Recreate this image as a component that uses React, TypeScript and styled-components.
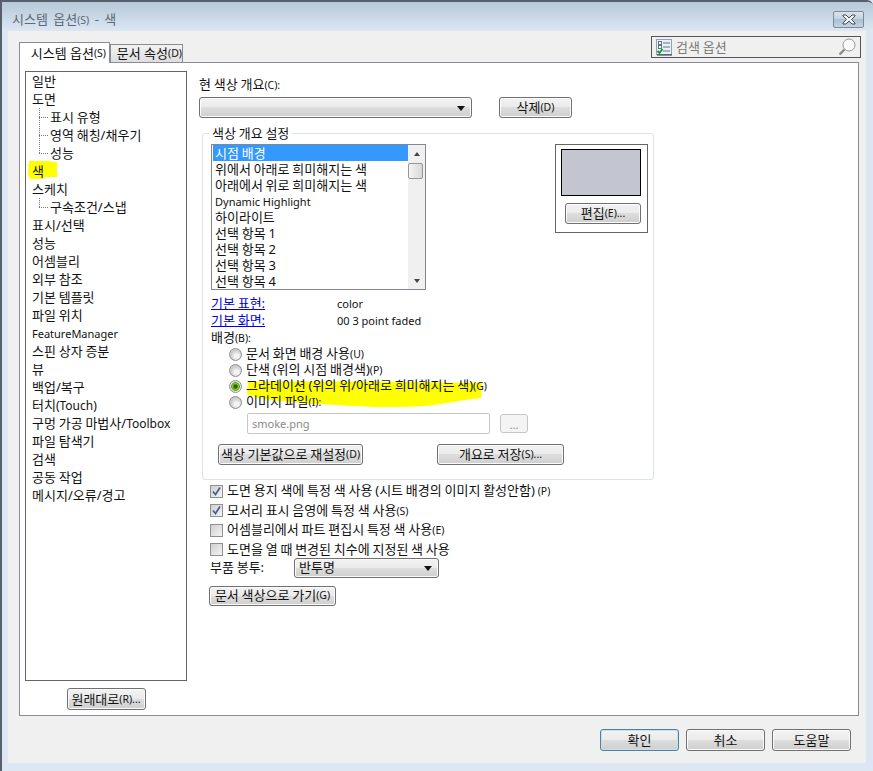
import React from 'react';
import styled, { createGlobalStyle, css } from 'styled-components';

const GlobalStyle = createGlobalStyle`
    html, body {
        margin: 0;
        padding: 0;
        background: #dce7f3;
    }

    body {
        font-family: "Noto Sans", "Noto Sans CJK KR", sans-serif;
        font-size: 13px;
        line-height: 15px;
        word-spacing: -0.6px;
        color: #111;
    }

    * {
        box-sizing: border-box;
    }
`;

const TREE: { label?: string; latin?: string; suffix?: string; child?: boolean; last?: boolean; mark?: boolean }[] = [
    { label: '일반' },
    { label: '도면' },
    { label: '표시 유형', child: true },
    { label: '영역 해칭/채우기', child: true },
    { label: '성능', child: true, last: true },
    { label: '색', mark: true },
    { label: '스케치' },
    { label: '구속조건/스냅', child: true, last: true },
    { label: '표시/선택' },
    { label: '성능' },
    { label: '어셈블리' },
    { label: '외부 참조' },
    { label: '기본 템플릿' },
    { label: '파일 위치' },
    { latin: 'FeatureManager' },
    { label: '스핀 상자 증분' },
    { label: '뷰' },
    { label: '백업/복구' },
    { label: '터치', suffix: '(Touch)' },
    { label: '구멍 가공 마법사/', suffix: 'Toolbox' },
    { label: '파일 탐색기' },
    { label: '검색' },
    { label: '공동 작업' },
    { label: '메시지/오류/경고' },
];

const COLOR_ITEMS = [
    '시점 배경',
    '위에서 아래로 희미해지는 색',
    '아래에서 위로 희미해지는 색',
    'Dynamic Highlight',
    '하이라이트',
    '선택 항목 1',
    '선택 항목 2',
    '선택 항목 3',
    '선택 항목 4',
];

const App: React.FC = () => {
    return (
        <Window>
            <GlobalStyle />
            <TitleBar>
                <Title>
                    시스템 옵션<Key>(S)</Key> - 색
                </Title>
                <CloseButton>
                    <svg width="16" height="11" viewBox="0 0 16 11">
                        <path
                            d="M2 1h3l3 3 3-3h3v1l-3.5 3.5L14 9v1h-3L8 7l-3 3H2V9l3.5-3.5L2 2z"
                            fill="#f4f6f8"
                            stroke="#3f4d5c"
                            strokeWidth="1"
                        />
                    </svg>
                </CloseButton>
            </TitleBar>

            <Body>
                <TabStrip>
                    <Tabs>
                        <Tab $active>
                            시스템 옵션<Key>(S)</Key>
                        </Tab>
                        <Tab>
                            문서 속성<Key>(D)</Key>
                        </Tab>
                    </Tabs>
                    <SearchBox>
                        <svg width="17" height="17" viewBox="0 0 17 17">
                            <rect x="0.5" y="0.5" width="15" height="15" fill="#eaf1f6" stroke="#8fa3b3" />
                            <rect x="2.5" y="2.5" width="3" height="3" fill="#fff" stroke="#5f7486" />
                            <rect x="2.5" y="6.5" width="3" height="3" fill="#fff" stroke="#5f7486" />
                            <path d="M7 4h7M7 8h7M7 12h7" stroke="#5f7486" />
                            <path d="M1 16h15" stroke="#1e2a38" />
                            <path d="M1.5 12l2 2 3-4" stroke="#0c9a1e" strokeWidth="1.8" fill="none" />
                        </svg>
                        <SearchText>검색 옵션</SearchText>
                        <svg width="18" height="18" viewBox="0 0 18 18">
                            <circle cx="11" cy="7" r="6" fill="#fbfbfb" stroke="#9a9a9a" />
                            <path d="M6.5 11.5L1.5 16.5" stroke="#8a8a8a" strokeWidth="2.4" />
                        </svg>
                    </SearchBox>
                </TabStrip>

                <Pane>
                    <LeftColumn>
                        <Tree>
                            {TREE.map((item, i) => (
                                <TreeRow key={i} $child={item.child}>
                                    {item.child && <Elbow $last={item.last} />}
                                    {item.mark && (
                                        <Marker width="30" height="18" viewBox="0 0 30 18">
                                            <path d="M1 0h21l1 1h6v15H17l-1 2H2l-2-5z" fill="#ffff00" />
                                        </Marker>
                                    )}
                                    <RowText>
                                        {item.label}
                                        {item.suffix && <TreeSuffix>{item.suffix}</TreeSuffix>}
                                        {item.latin && <Latin>{item.latin}</Latin>}
                                    </RowText>
                                </TreeRow>
                            ))}
                        </Tree>
                        <ResetWrap>
                            <Button $width={79} $height={22}>
                                원래대로<Key>(R)...</Key>
                            </Button>
                        </ResetWrap>
                    </LeftColumn>

                    <RightColumn>
                        <FieldLabel>
                            현 색상 개요<Key>(C):</Key>
                        </FieldLabel>
                        <SchemeRow>
                            <Dropdown $width={273} $height={21} />
                            <Button $width={73} $height={21}>
                                삭제<Key>(D)</Key>
                            </Button>
                        </SchemeRow>

                        <Group>
                            <Legend>색상 개요 설정</Legend>
                            <ListRow>
                                <ListBox>
                                    <ListItems>
                                        {COLOR_ITEMS.map((item, i) => (
                                            <ListItem key={i} $selected={i === 0}>
                                                {item === 'Dynamic Highlight' ? <Latin>{item}</Latin> : item}
                                            </ListItem>
                                        ))}
                                    </ListItems>
                                    <ScrollBar>
                                        <ScrollArrow $up />
                                        <ScrollThumb />
                                        <ScrollArrow />
                                    </ScrollBar>
                                </ListBox>
                                <PreviewBox>
                                    <Swatch />
                                    <Button $width={76} $height={21}>
                                        편집<Key>(E)...</Key>
                                    </Button>
                                </PreviewBox>
                            </ListRow>

                            <InfoGrid>
                                <InfoLink>기본 표현:</InfoLink>
                                <Latin>color</Latin>
                                <InfoLink>기본 화면:</InfoLink>
                                <Latin>00 3 point faded</Latin>
                            </InfoGrid>
                            <FieldLabel $tight>
                                배경<Key>(B):</Key>
                            </FieldLabel>

                            <RadioList>
                                <RadioRow>
                                    <Radio />
                                    <span>
                                        문서 화면 배경 사용<Key>(U)</Key>
                                    </span>
                                </RadioRow>
                                <RadioRow>
                                    <Radio />
                                    <span>
                                        단색 (위의 시점 배경색)<Key>(P)</Key>
                                    </span>
                                </RadioRow>
                                <RadioRow>
                                    <Radio $checked />
                                    <Scribble width="238" height="26" viewBox="0 0 238 26">
                                        <path
                                            d="M2 0C60 -1 170 0 236 1L235 16C215 18 205 21 180 24C150 26 120 25 90 23C60 21 35 20 12 16L1 12Z"
                                            fill="#ffff00"
                                        />
                                    </Scribble>
                                    <RadioText>
                                        그라데이션 (위의 위/아래로 희미해지는 색)<Key>(G)</Key>
                                    </RadioText>
                                </RadioRow>
                                <RadioRow>
                                    <Radio />
                                    <RadioText>
                                        이미지 파일<Key>(I):</Key>
                                    </RadioText>
                                </RadioRow>
                            </RadioList>

                            <FileRow>
                                <FileInput>smoke.png</FileInput>
                                <BrowseButton>...</BrowseButton>
                            </FileRow>

                            <ActionRow>
                                <Button $width={145} $height={21}>
                                    색상 기본값으로 재설정<Key>(D)</Key>
                                </Button>
                                <Button $width={127} $height={21}>
                                    개요로 저장<Key>(S)...</Key>
                                </Button>
                            </ActionRow>
                        </Group>

                        <CheckList>
                            <CheckRow>
                                <CheckBox>
                                    <CheckMark />
                                </CheckBox>
                                <span>
                                    도면 용지 색에 특정 색 사용 (시트 배경의 이미지 활성안함) <Key>(P)</Key>
                                </span>
                            </CheckRow>
                            <CheckRow>
                                <CheckBox>
                                    <CheckMark />
                                </CheckBox>
                                <span>
                                    모서리 표시 음영에 특정 색 사용<Key>(S)</Key>
                                </span>
                            </CheckRow>
                            <CheckRow>
                                <CheckBox />
                                <span>
                                    어셈블리에서 파트 편집시 특정 색 사용<Key>(E)</Key>
                                </span>
                            </CheckRow>
                            <CheckRow>
                                <CheckBox />
                                <span>도면을 열 때 변경된 치수에 지정된 색 사용</span>
                            </CheckRow>
                        </CheckList>

                        <PartRow>
                            <PartLabel>부품 봉투:</PartLabel>
                            <Dropdown $width={145} $height={20}>
                                반투명
                            </Dropdown>
                        </PartRow>

                        <GoRow>
                            <Button $width={127} $height={20}>
                                문서 색상으로 가기<Key>(G)</Key>
                            </Button>
                        </GoRow>
                    </RightColumn>
                </Pane>

                <Footer>
                    <Button $width={79} $height={22} $primary>
                        확인
                    </Button>
                    <Button $width={79} $height={22}>
                        취소
                    </Button>
                    <Button $width={79} $height={22}>
                        도움말
                    </Button>
                </Footer>
            </Body>
        </Window>
    );
};

const CheckMark: React.FC = () => (
    <svg width="11" height="11" viewBox="0 0 11 11">
        <path d="M2 5.5l2.5 3L9 1.5" stroke="#4a6096" strokeWidth="1.8" fill="none" />
    </svg>
);

const Window = styled.div`
    width: 873px;
    height: 771px;
    overflow: hidden;
    display: flex;
    flex-direction: column;
    padding: 0 0 8px 2px;
    background: #dce7f3;
    border-top: 2px solid #56606c;
    border-left: 2px solid #56606c;
    border-top-right-radius: 6px;
`;

const TitleBar = styled.div`
    height: 29px;
    flex-shrink: 0;
    display: flex;
    align-items: flex-start;
    justify-content: space-between;
    padding: 9px 9px 0 8px;
    margin-left: -2px;
    background: linear-gradient(to bottom, #b6c8d8, #dce7f3);
`;

const Title = styled.div`
    color: #5d6973;
    line-height: 16px;
    padding-left: 2px;
    word-spacing: 2px;
`;

const CloseButton = styled.div`
    width: 31px;
    height: 17px;
    display: flex;
    align-items: center;
    justify-content: center;
    border: 1px solid #7b8a99;
    border-radius: 2px;
    background: linear-gradient(to bottom, #dbe4ec, #c2d0dd 50%, #aebfcf 50%, #c4d3e0);
`;

const Body = styled.div`
    flex: 1;
    display: flex;
    flex-direction: column;
    margin: 0 7px 0 4px;
    padding: 5px 5px 0 11px;
    background: #f0f0f0;
`;

const TabStrip = styled.div`
    height: 26px;
    flex-shrink: 0;
    display: flex;
    justify-content: space-between;
    align-items: flex-start;
`;

const Tabs = styled.div`
    height: 27px;
    display: flex;
    align-items: flex-end;
    position: relative;
    z-index: 1;
`;

const Tab = styled.div<{ $active?: boolean }>`
    display: flex;
    align-items: center;
    justify-content: flex-end;
    word-spacing: 0;
    border: 1px solid #898c95;
    border-bottom: none;
    ${(p) =>
        p.$active
            ? css`
                  width: 91px;
                  height: 21px;
                  padding-right: 3px;
                  background: #fff;
              `
            : css`
                  width: 73px;
                  height: 18px;
                  margin-bottom: 1px;
                  background: linear-gradient(to bottom, #f2f2f2, #dedede);
              `}
`;

const Key = styled.span`
    font-size: 10.5px;
    word-spacing: 0;
`;

const Latin = styled.span`
    font-size: 11px;
    word-spacing: 0;
`;

const TreeSuffix = styled.span`
    font-size: 12px;
`;

const SearchBox = styled.div`
    width: 210px;
    height: 22px;
    display: flex;
    align-items: center;
    padding: 0 4px 0 4px;
    border: 1px solid #555;
    background: #f0f0f0;
`;

const SearchText = styled.span`
    flex: 1;
    margin-left: 3px;
    color: #7b7b7b;
`;

const Pane = styled.div`
    width: 840px;
    height: 654px;
    flex-shrink: 0;
    display: flex;
    padding: 8px 0 0 5px;
    background: #fff;
    border: 1px solid #898c95;
`;

const LeftColumn = styled.div`
    width: 162px;
    flex-shrink: 0;
    display: flex;
    flex-direction: column;
`;

const Tree = styled.div`
    height: 610px;
    padding: 0 0 0 6px;
    border: 1px solid #666;
    background: #fff;
`;

const TreeRow = styled.div<{ $child?: boolean }>`
    position: relative;
    height: 18px;
    display: flex;
    align-items: center;
    white-space: nowrap;
    padding-left: ${(p) => (p.$child ? '7px' : '0')};
`;

const RowText = styled.span`
    position: relative;
`;

const Elbow = styled.span<{ $last?: boolean }>`
    width: 11px;
    height: 18px;
    flex-shrink: 0;
    background-image: repeating-linear-gradient(to bottom, #777 0 1px, transparent 1px 2px),
        repeating-linear-gradient(to right, #777 0 1px, transparent 1px 2px);
    background-repeat: no-repeat;
    background-position: left top, left center;
    background-size: 1px ${(p) => (p.$last ? '50%' : '100%')}, 9px 1px;
`;

const Marker = styled.svg`
    position: absolute;
    left: -4px;
    top: -1px;
`;

const ResetWrap = styled.div`
    display: flex;
    justify-content: center;
    margin-top: 7px;
`;

const Button = styled.div<{ $width: number; $height: number; $primary?: boolean }>`
    width: ${(p) => p.$width}px;
    height: ${(p) => p.$height}px;
    flex-shrink: 0;
    display: flex;
    align-items: center;
    justify-content: center;
    white-space: nowrap;
    border: 1px solid ${(p) => (p.$primary ? '#4f8299' : '#707070')};
    border-radius: 3px;
    box-shadow: inset 0 0 0 1px ${(p) => (p.$primary ? '#c4e3ef' : '#fbfbfb')};
    background: linear-gradient(to bottom, #f2f2f2, #ebebeb 50%, #dddddd 50%, #cfcfcf);
`;

const RightColumn = styled.div`
    margin-left: 12px;
    flex: 1;
`;

const FieldLabel = styled.div<{ $tight?: boolean }>`
    height: ${(p) => (p.$tight ? '17px' : '16px')};
    line-height: ${(p) => (p.$tight ? '17px' : '16px')};
    margin-top: ${(p) => (p.$tight ? '0' : '5px')};
`;

const SchemeRow = styled.div`
    margin-top: 5px;
    display: flex;
    gap: 27px;
`;

const Dropdown = styled.div<{ $width: number; $height: number }>`
    width: ${(p) => p.$width}px;
    height: ${(p) => p.$height}px;
    position: relative;
    display: flex;
    align-items: center;
    padding-left: 4px;
    border: 1px solid #707070;
    border-radius: 3px;
    box-shadow: inset 0 0 0 1px #fbfbfb;
    background: linear-gradient(to bottom, #f2f2f2, #ebebeb 50%, #dddddd 50%, #cfcfcf);

    &::after {
        content: '';
        position: absolute;
        right: 6px;
        top: 50%;
        margin-top: -2px;
        border-left: 4px solid transparent;
        border-right: 4px solid transparent;
        border-top: 5px solid #111;
    }
`;

const Group = styled.fieldset`
    width: 452px;
    height: 355px;
    margin: 7px 0 0 3px;
    padding: 3px 5px 0 8px;
    border: 1px solid #dce3ea;
    border-radius: 3px;
    background: #fff;
`;

const Legend = styled.legend`
    height: 16px;
    line-height: 16px;
    padding: 0 3px;
    margin-left: -2px;
`;

const ListRow = styled.div`
    display: flex;
    justify-content: space-between;
    align-items: flex-start;
`;

const ListBox = styled.div`
    width: 215px;
    height: 146px;
    display: flex;
    padding: 0 0 0 1px;
    border: 1px solid #828790;
    background: #fff;
`;

const ListItems = styled.div`
    flex: 1;
`;

const ListItem = styled.div<{ $selected?: boolean }>`
    height: 16px;
    line-height: 16px;
    padding-left: 2px;
    white-space: nowrap;
    ${(p) =>
        p.$selected &&
        css`
            background: #3399ff;
            color: #fff;
        `}
`;

const ScrollBar = styled.div`
    width: 17px;
    display: flex;
    flex-direction: column;
    background: #f0f0f0;
`;

const ScrollArrow = styled.div<{ $up?: boolean }>`
    height: ${(p) => (p.$up ? '18px' : '17px')};
    display: flex;
    align-items: center;
    justify-content: center;
    ${(p) => !p.$up && 'margin-top: auto;'}

    &::before {
        content: '';
        border-left: 3px solid transparent;
        border-right: 3px solid transparent;
        ${(p) => (p.$up ? 'border-bottom: 4px solid #444;' : 'border-top: 4px solid #444;')}
    }
`;

const ScrollThumb = styled.div`
    height: 16px;
    margin-right: 2px;
    border: 1px solid #979797;
    border-radius: 2px;
    background: linear-gradient(to right, #f4f4f4, #d8d8d8);
`;

const PreviewBox = styled.div`
    width: 93px;
    height: 89px;
    display: flex;
    flex-direction: column;
    align-items: flex-end;
    padding: 4px 6px 0 0;
    border: 1px solid #666;
`;

const Swatch = styled.div`
    width: 80px;
    height: 47px;
    margin-bottom: 7px;
    border: 1px solid #000;
    background: #c3c6d0;
`;

const InfoGrid = styled.div`
    margin-top: 5px;
    display: grid;
    grid-template-columns: 126px 1fr;
    grid-auto-rows: 17px;
    line-height: 17px;
`;

const InfoLink = styled.span`
    color: #0000e0;
    text-decoration: underline;
`;

const RadioList = styled.div`
    margin: 0 0 0 18px;
`;

const RadioRow = styled.div`
    position: relative;
    height: 16px;
    display: flex;
    align-items: center;
    gap: 4px;
    white-space: nowrap;
`;

const RadioText = styled.span`
    position: relative;
`;

const Radio = styled.span<{ $checked?: boolean }>`
    position: relative;
    z-index: 1;
    width: 13px;
    height: 13px;
    flex-shrink: 0;
    border: 1px solid #8e8f8f;
    border-radius: 50%;
    background: ${(p) =>
        p.$checked
            ? 'radial-gradient(circle, #2f5f0a 0 1.5px, #8fd01f 3px, #4f9a10 4px, #e8e8e8 4.6px)'
            : 'radial-gradient(circle at 60% 65%, #f4f4f4 0 2px, #cdcdcd 5.5px)'};
`;

const Scribble = styled.svg`
    position: absolute;
    left: 17px;
    top: 4px;
    overflow: visible;
`;

const FileRow = styled.div`
    margin: 3px 0 0 36px;
    display: flex;
    align-items: center;
    gap: 10px;
`;

const FileInput = styled.div`
    width: 243px;
    height: 21px;
    padding-left: 4px;
    line-height: 19px;
    color: #8a8a8a;
    font-size: 11px;
    border: 1px solid #c6c6c6;
    border-radius: 2px;
    background: #fff;
`;

const BrowseButton = styled.div`
    width: 28px;
    height: 19px;
    text-align: center;
    line-height: 19px;
    color: #8a8a8a;
    font-size: 11px;
    border: 1px solid #c6c6c6;
    border-radius: 3px;
    background: #f4f4f4;
`;

const ActionRow = styled.div`
    margin: 10px 0 0 7px;
    display: flex;
    gap: 74px;
`;

const CheckList = styled.div`
    margin: 3px 0 0 11px;
    display: flex;
    flex-direction: column;
    gap: 3.67px;
`;

const CheckRow = styled.div`
    height: 16px;
    display: flex;
    align-items: center;
    gap: 4px;
    white-space: nowrap;
`;

const CheckBox = styled.span`
    width: 13px;
    height: 13px;
    flex-shrink: 0;
    display: flex;
    align-items: center;
    justify-content: center;
    border: 1px solid #8e8f8f;
    background: linear-gradient(135deg, #cfcfcf, #f4f4f4);
`;

const PartRow = styled.div`
    margin-left: 11px;
    display: flex;
    align-items: center;
`;

const PartLabel = styled.span`
    width: 84px;
`;

const GoRow = styled.div`
    margin: 8px 0 0 10px;
`;

const Footer = styled.div`
    flex: 1;
    display: flex;
    justify-content: flex-end;
    gap: 7px;
    padding: 13px 10px 0 0;
`;

export default App;
